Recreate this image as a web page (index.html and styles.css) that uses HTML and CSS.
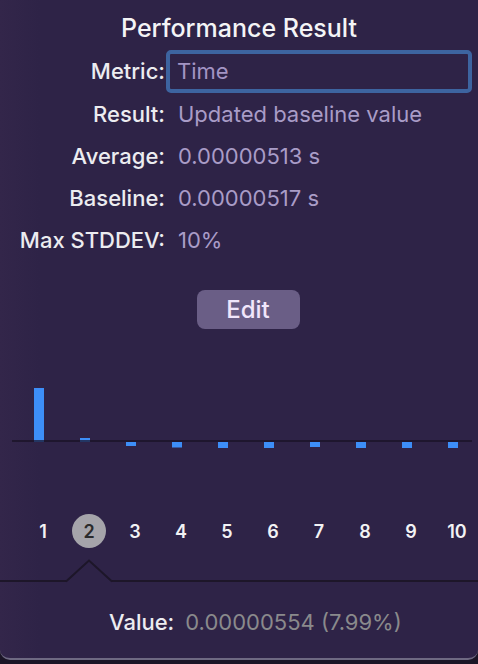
FILE: index.html
```
<!DOCTYPE html>
<html>
<head>
<meta charset="utf-8">
<link rel="stylesheet" href="styles.css">
</head>
<body>
<div class="popover">
  <h1 class="title">Performance Result</h1>
  <div class="form">
    <span class="label">Metric:</span><div class="field">Time</div>
    <span class="label">Result:</span><span class="value">Updated baseline value</span>
    <span class="label">Average:</span><span class="value">0.00000513 s</span>
    <span class="label">Baseline:</span><span class="value">0.00000517 s</span>
    <span class="label">Max STDDEV:</span><span class="value">10%</span>
  </div>
  <div class="actions"><button class="btn">Edit</button></div>
  <svg class="chart" width="478" height="120" viewBox="0 0 478 120">
    <g fill="#3d8ef7">
      <rect x="34" y="48" width="10" height="54"/>
      <rect x="80" y="98" width="10" height="4"/>
      <rect x="126" y="102" width="10" height="4"/>
      <rect x="172" y="102" width="10" height="5.5"/>
      <rect x="218" y="102" width="10" height="6"/>
      <rect x="264" y="102" width="10" height="6"/>
      <rect x="310" y="102" width="10" height="5"/>
      <rect x="356" y="102" width="10" height="6"/>
      <rect x="402" y="102" width="10" height="6"/>
      <rect x="448" y="102" width="10" height="6"/>
    </g>
    <rect x="12" y="100" width="460" height="2" fill="rgba(24,17,36,0.7)"/>
  </svg>
  <div class="ticks">
    <span class="tick">1</span>
    <span class="tick active">2</span>
    <span class="tick">3</span>
    <span class="tick">4</span>
    <span class="tick">5</span>
    <span class="tick">6</span>
    <span class="tick">7</span>
    <span class="tick">8</span>
    <span class="tick">9</span>
    <span class="tick">10</span>
  </div>
  <div class="detail">
    <svg class="caret" width="48" height="24" viewBox="0 0 48 24">
      <polygon points="1,23 24,1 47,23" fill="#2e2347"/>
      <polyline points="1,22.5 24,1.5 47,22.5" fill="none" stroke="#1d1629" stroke-width="2"/>
    </svg>
    <div class="value-row">
      <span class="label">Value:</span>
      <span class="gray">0.00000554 (7.99%)</span>
    </div>
  </div>
</div>
</body>
</html>
```
FILE: styles.css
```
html, body {
  margin: 0;
  padding: 0;
}
body {
  width: 478px;
  height: 664px;
  overflow: hidden;
  background: #1b1526;
  font-family: Inter, "Noto Sans", "Liberation Sans", sans-serif;
  color: #ececf0;
}
.popover {
  background: linear-gradient(90deg, #33264a 0px, #2e2347 40px, #2e2347 100%);
  height: 658px;
  border-bottom: 2px solid #6e6982;
  border-radius: 0 0 10px 10px;
  overflow: hidden;
}
.title {
  margin: 0;
  padding-top: 14px;
  font-size: 25px;
  line-height: 28px;
  font-weight: 500;
  text-align: center;
  color: #f4f4f6;
}
.form {
  margin-top: 8px;
  display: grid;
  grid-template-columns: 165px 306px;
  column-gap: 1px;
  font-size: 22px;
  line-height: 42px;
}
.label {
  text-align: right;
  color: #ececf0;
  font-weight: 500;
}
.value {
  padding-left: 12px;
  color: #a99cc7;
}
.field {
  box-sizing: border-box;
  height: 43px;
  border: 4px solid #3d64a0;
  border-radius: 5px;
  padding-left: 7px;
  line-height: 35px;
  color: #a394c4;
}
.actions {
  margin-top: 29px;
  display: flex;
  justify-content: center;
  padding-left: 18px;
}
.btn {
  width: 103px;
  height: 39px;
  border: none;
  border-radius: 8px;
  background: #6a5e86;
  color: #f1e6fb;
  font-family: inherit;
  font-size: 24px;
  font-weight: 500;
  padding: 0;
}
.chart {
  display: block;
  margin-top: 11px;
}
.ticks {
  margin-top: 54px;
  display: flex;
  padding-left: 20px;
  height: 34px;
}
.tick {
  flex: 0 0 46px;
  display: flex;
  align-items: center;
  justify-content: center;
  font-size: 18px;
  font-weight: 600;
  color: #f2f2f4;
}
.tick.active {
  position: relative;
  color: #2b2b2d;
  z-index: 0;
}
.tick.active::after {
  content: "";
  position: absolute;
  width: 34px;
  height: 34px;
  border-radius: 50%;
  background: #a5a4aa;
  left: 6px;
  top: 0;
  z-index: -1;
}
.detail {
  position: relative;
  margin-top: 32px;
  border-top: 2px solid #1d1629;
  padding-top: 19px;
}
.caret {
  position: absolute;
  left: 65px;
  top: -23px;
}
.value-row {
  display: flex;
  gap: 11px;
  padding-left: 109px;
  font-size: 22px;
  line-height: 42px;
}
.gray {
  color: #8a8a8c;
}
```
